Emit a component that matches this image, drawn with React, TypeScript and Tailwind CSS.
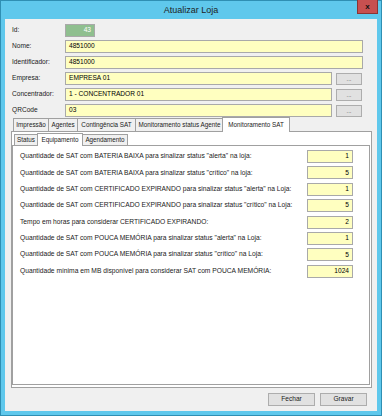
import React from "react";

const font = "font-['Liberation_Sans',Arial,sans-serif]";

function Field({ label, value, width, button }: { label: string; value: string; width: string; button?: boolean }) {
  return (
    <div className="flex items-center h-[13px]">
      <div className="w-[60px] pl-[7px] text-[6.6px] text-[#1a1a1a] leading-none">{label}</div>
      <div className={`${width} h-[13px] bg-[#ffffc0] border border-[#a9a9a9] flex items-center pl-[3px] text-[6.6px] text-black leading-none`}>
        {value}
      </div>
      {button && (
        <div className="ml-[4px] w-[26px] h-[12px] bg-[#e1e1e1] border border-[#adadad] flex items-center justify-center text-[6px] text-[#444] leading-none">
          ...
        </div>
      )}
    </div>
  );
}

const outerTabs = [
  { t: "Impressão", w: "w-[36px]" },
  { t: "Agentes", w: "w-[30px]" },
  { t: "Contingência SAT", w: "w-[59px]" },
  { t: "Monitoramento status Agente", w: "w-[89px]" },
];

const rows: [string, string][] = [
  ["Quantidade de SAT com BATERIA BAIXA para sinalizar status \"alerta\" na loja:", "1"],
  ["Quantidade de SAT com BATERIA BAIXA para sinalizar status \"crítico\" na loja:", "5"],
  ["Quantidade de SAT com CERTIFICADO EXPIRANDO para sinalizar status \"alerta\" na Loja:", "1"],
  ["Quantidade de SAT com CERTIFICADO EXPIRANDO para sinalizar status \"crítico\" na Loja:", "5"],
  ["Tempo em horas para considerar CERTIFICADO EXPIRANDO:", "2"],
  ["Quantidade de SAT com POUCA MEMÓRIA para sinalizar status \"alerta\" na Loja:", "1"],
  ["Quantidade de SAT com POUCA MEMÓRIA para sinalizar status \"crítico\" na Loja:", "5"],
  ["Quantidade mínima em MB disponível para considerar SAT com POUCA MEMÓRIA:", "1024"],
];

export default function App() {
  return (
    <div className={`w-[382px] h-[416px] bg-[#5fc8ec] border border-[#2f8fb3] flex flex-col ${font}`}>
      <div className="h-[18px] relative flex items-center justify-center">
        <span className="text-[9px] text-[#1e1e1e] leading-none mt-[1px]">Atualizar Loja</span>
        <div className="absolute right-[3px] top-[-1px] w-[21px] h-[14px] bg-[#c75050] border border-[#8a3434] border-t-0 flex items-center justify-center">
          <span className="text-[8px] font-bold text-[#111] leading-none">x</span>
        </div>
      </div>
      <div className="mx-[4px] mb-[4px] flex-1 bg-[#f0f0f0] flex flex-col pt-[5px]">
        <div className="flex flex-col gap-[3px]">
          <div className="flex items-center h-[13px]">
            <div className="w-[60px] pl-[7px] text-[6.6px] text-[#1a1a1a] leading-none">Id:</div>
            <div className="w-[30px] h-[13px] bg-[#8fbf8f] border border-[#a9a9a9] flex items-center justify-end pr-[3px] text-[6.6px] text-white leading-none">
              43
            </div>
          </div>
          <Field label="Nome:" value="4851000" width="w-[298px]" />
          <Field label="Identificador:" value="4851000" width="w-[298px]" />
          <Field label="Empresa:" value="EMPRESA 01" width="w-[267px]" button />
          <Field label="Concentrador:" value="1 - CONCENTRADOR 01" width="w-[267px]" button />
          <Field label="QRCode" value="03" width="w-[267px]" button />
        </div>

        <div className="h-[14px] flex items-end pl-[8px] relative z-10">
          {outerTabs.map((tab) => (
            <div
              key={tab.t}
              className={`${tab.w} h-[13px] bg-[#f0f0f0] border border-[#a0a0a0] border-b-0 -mr-px flex items-center justify-center text-[6.3px] text-[#1a1a1a] leading-none whitespace-nowrap`}
            >
              {tab.t}
            </div>
          ))}
          <div className="w-[68px] h-[15px] -ml-px bg-white border border-[#a0a0a0] border-b-0 mb-[-1px] flex items-center justify-center text-[6.3px] text-[#1a1a1a] leading-none whitespace-nowrap">
            Monitoramento SAT
          </div>
        </div>

        <div className="ml-[6px] w-[361px] h-[257px] bg-white border border-[#a0a0a0] flex flex-col">
          <div className="h-[13px] flex items-end pl-[2px] relative z-10">
            <div className="w-[24px] h-[11px] bg-[#f0f0f0] border border-[#a0a0a0] border-b-0 flex items-center justify-center text-[6.3px] text-[#1a1a1a] leading-none">
              Status
            </div>
            <div className="w-[46px] h-[13px] -ml-px bg-white border border-[#a0a0a0] border-b-0 mb-[-1px] flex items-center justify-center text-[6.3px] text-[#1a1a1a] leading-none">
              Equipamento
            </div>
            <div className="w-[46px] h-[11px] -ml-px bg-[#f0f0f0] border border-[#a0a0a0] border-b-0 flex items-center justify-center text-[6.3px] text-[#1a1a1a] leading-none">
              Agendamento
            </div>
          </div>
          <div className="ml-0 mr-px mb-[2px] flex-1 bg-white border border-[#a0a0a0] flex flex-col pt-[4px] gap-[3.4px]">
            {rows.map(([label, value], i) => (
              <div key={i} className="flex items-center h-[13px] pl-[7px]">
                <div className="flex-1 text-[6.7px] text-[#1a1a1a] leading-none whitespace-nowrap">{label}</div>
                <div className="w-[46px] h-[13px] mr-[16px] bg-[#ffffc0] border border-[#a9a9a9] flex items-center justify-end pr-[3px] text-[6.6px] text-black leading-none">
                  {value}
                </div>
              </div>
            ))}
          </div>
        </div>

        <div className="flex justify-end gap-[5px] pr-[10px] mt-[5px]">
          <div className="w-[47px] h-[13px] bg-[#e1e1e1] border border-[#adadad] flex items-center justify-center text-[6.6px] text-[#1a1a1a] leading-none">
            Fechar
          </div>
          <div className="w-[47px] h-[13px] bg-[#e1e1e1] border border-[#adadad] flex items-center justify-center text-[6.6px] text-[#1a1a1a] leading-none">
            Gravar
          </div>
        </div>
      </div>
    </div>
  );
}
